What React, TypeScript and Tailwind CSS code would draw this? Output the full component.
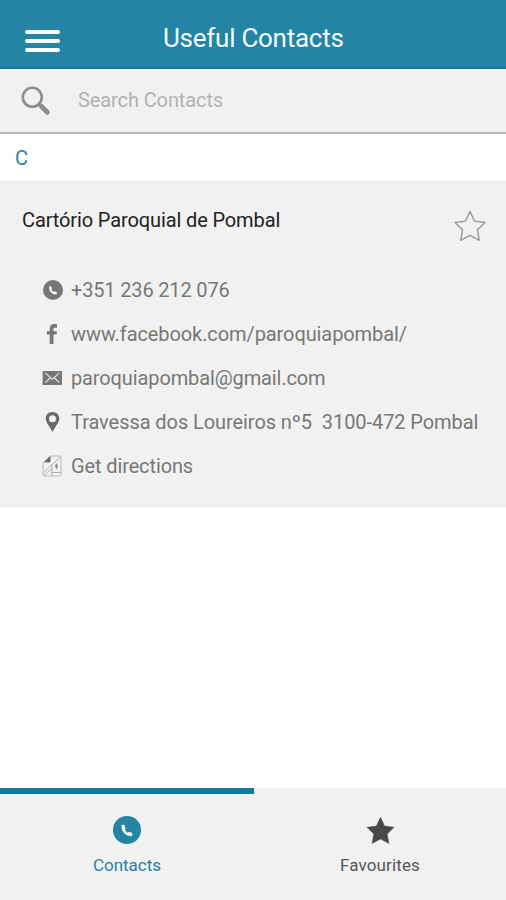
import type { ReactNode } from "react";

function Handset({ className }: { className: string }) {
  return (
    <svg viewBox="0 0 28 28" className={className}>
      <circle cx="14" cy="14" r="14" fill="currentColor" />
      <path d="M8.9 9.3C8.7 15.6 12.6 20 18.8 19.7V17.1L15.8 16.5 14.6 17.2Q12.4 15.7 11.5 13.5L12 12.3 11.2 9.3Z" fill="#fff" stroke="#fff" strokeWidth=".8" strokeLinejoin="round" />
    </svg>
  );
}

function FacebookIcon() {
  return (
    <svg viewBox="0 0 20 20" className="h-5 w-5" fill="currentColor">
      <path d="M15 .2v3.5h-2c-1.1 0-1.5.5-1.5 1.4v2.1H15l-.5 3.3h-3V20H7.7v-9.5H4.9V7.2h2.8V4.7C7.7 1.8 9.4.1 12 .1c1.2 0 2.4 0 3 .1Z" />
    </svg>
  );
}

function MailIcon() {
  return (
    <svg viewBox="0 0 20 20" className="h-5 w-5">
      <rect x=".6" y="3" width="19.4" height="14" fill="currentColor" />
      <path d="M3.4 5.2 10.3 11.2 17.2 5.2M3.4 14.6 8 10M17.2 14.6 12.6 10" fill="none" stroke="#e4e4e4" strokeWidth="1.1" />
    </svg>
  );
}

function PinIcon() {
  return (
    <svg viewBox="0 0 20 20" className="h-5 w-5" fill="#686868">
      <path fillRule="evenodd" d="M10.5 0C14.4 0 17.3 2.8 17.3 6.6 17.3 10.7 12.9 15 10.5 20 8.1 15 3.7 10.7 3.7 6.6 3.7 2.8 6.6 0 10.5 0Zm0 3.2a3.5 3.5 0 1 0 0 7 3.5 3.5 0 0 0 0-7Z" />
    </svg>
  );
}

function MapIcon() {
  return (
    <svg viewBox="0 0 20 22" className="h-[22px] w-5" fill="none" stroke="#a8a8a8" strokeWidth=".9">
      <path d="M8.5 1H19v19.2q0 .8-.8.8H1.8Q1 21 1 20.2V8.2Z" stroke="#b8b8b8" />
      <path d="M1.7 7.2 8.5.8v5.5L7.5 7.4Z" fill="#686868" stroke="none" />
      <path d="M18.5 2 1.6 17.2M10 9.8v11M10 13.5 2 20M10 17.5h8.7" />
      <path d="M14.5 8.2c1.8 1.2 1.6 4 0 6.3-1.6-2.3-1.8-5.1 0-6.3Z" fill="#8a8a8a" stroke="none" />
    </svg>
  );
}

function StarShape({ className, filled = false }: { className: string; filled?: boolean }) {
  return (
    <svg viewBox="0 0 32 32" className={className}>
      <path
        d="M16 1.5 20.6 11.1 31 12.5 23.4 19.8 25.3 30.3 16 25.4 6.7 30.3 8.6 19.8 1 12.5 11.4 11.1Z"
        fill={filled ? "currentColor" : "none"}
        stroke="currentColor"
        strokeWidth={filled ? 0.5 : 1.4}
        strokeLinejoin="round"
      />
    </svg>
  );
}

function Row({ icon, children, tracking }: { icon: ReactNode; children: ReactNode; tracking: string }) {
  return (
    <div className="flex h-11 items-center">
      <span className="flex w-[29px] shrink-0 items-center">{icon}</span>
      <span className={`whitespace-pre text-xl leading-6 ${tracking}`}>{children}</span>
    </div>
  );
}

export default function App() {
  return (
    <div className="flex h-[900px] w-[506px] flex-col overflow-hidden bg-white font-['Roboto',sans-serif]">
      <header className="flex h-[69px] shrink-0 items-center border-b-2 border-[#107795] bg-[#2384a4] pt-[9px]">
        <button aria-label="Menu" className="ml-[25px] flex w-[35px] flex-col gap-[5px] pt-1.5">
          <span className="h-1 rounded-sm bg-white" />
          <span className="h-1 rounded-sm bg-white" />
          <span className="h-1 rounded-sm bg-white" />
        </button>
        <h1 className="ml-[103px] text-[26px] leading-8 tracking-[-0.26px] text-[#f0faff]">Useful Contacts</h1>
      </header>

      <div className="flex h-[65px] shrink-0 items-center border-b-2 border-[#b9b9b9] bg-[#f1f1f1]">
        <svg viewBox="0 0 30 30" className="ml-[21px] h-[30px] w-[30px]" fill="none" stroke="#8c8c8c">
          <circle cx="11.3" cy="11.3" r="9.5" strokeWidth="2.6" />
          <path d="m18 18 2 2" strokeWidth="2.8" />
          <path d="m20.3 20.3 6 6" strokeWidth="4.8" strokeLinecap="round" />
        </svg>
        <span className="ml-[27px] pb-px text-xl leading-6 tracking-[-0.1px] text-[#b2b2b2]">Search Contacts</span>
      </div>

      <div className="flex h-[47px] shrink-0 items-center pl-[15px] text-xl leading-6 text-[#2384a4]">C</div>

      <section className="h-[326px] shrink-0 border-y border-[#e9e9e9] bg-[#f1f1f1]">
        <div className="flex h-[86px] items-start justify-between pl-[22px] pr-5">
          <h2 className="pt-[26px] text-xl leading-6 tracking-[-0.12px] text-[#222]">Cartório Paroquial de Pombal</h2>
          <StarShape className="mt-7 h-8 w-8 text-[#999]" />
        </div>
        <div className="pl-[42px] text-[#777]">
          <Row icon={<Handset className="ml-px h-5 w-5" />} tracking="tracking-[-0.16px]">+351 236 212 076</Row>
          <Row icon={<FacebookIcon />} tracking="tracking-[-0.09px]">www.facebook.com/paroquiapombal/</Row>
          <Row icon={<MailIcon />} tracking="tracking-[-0.12px]">paroquiapombal@gmail.com</Row>
          <Row icon={<PinIcon />} tracking="tracking-[-0.07px]">{"Travessa dos Loureiros nº5  3100-472 Pombal"}</Row>
          <Row icon={<MapIcon />} tracking="tracking-[-0.12px]">Get directions</Row>
        </div>
      </section>

      <nav className="mt-auto grid h-28 shrink-0 grid-cols-[254px_252px] bg-[#f1f1f1] text-[17px] leading-6">
        <div className="flex flex-col items-center border-t-[6px] border-[#127b99] pt-[22px] text-[#2384a4]">
          <Handset className="h-7 w-7" />
          <span className="mt-[9px]">Contacts</span>
        </div>
        <div className="flex flex-col items-center pt-7 text-[#555]">
          <StarShape filled className="h-[29px] w-[29px] text-[#484848]" />
          <span className="mt-2 tracking-[0.12px]">Favourites</span>
        </div>
      </nav>
    </div>
  );
}
